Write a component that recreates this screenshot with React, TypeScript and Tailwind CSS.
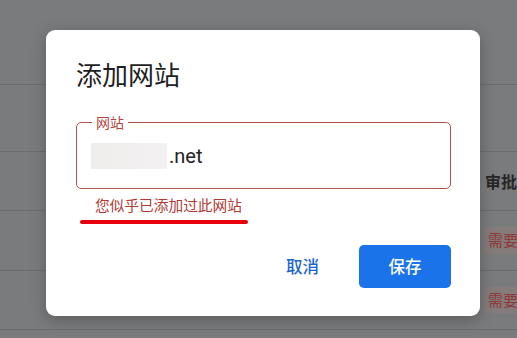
import React from "react";

const cjk = { fontFamily: '"Noto Sans CJK SC", "Noto Sans", sans-serif' };
const latin = { fontFamily: 'Roboto, "Noto Sans CJK SC", sans-serif' };

function BackgroundRows() {
    return (
        <div className="flex flex-col w-full h-full">
            <div className="h-[85px] border-b border-[#6c6d6e] shrink-0" />
            <div className="h-[67px] border-b border-[#6c6d6e] shrink-0" />
            <div className="h-[59px] border-b border-[#6c6d6e] shrink-0 flex items-center justify-end">
                <span className="text-[16px] font-bold text-[#262626] w-[32px] overflow-hidden whitespace-nowrap" style={cjk}>
                    审批
                </span>
            </div>
            <div className="h-[60px] border-b border-[#6c6d6e] shrink-0 flex items-center justify-end">
                <span className="bg-[#857b7b] text-[#8c3a3a] text-[15px] pl-[4px] py-[2px] w-[33px] overflow-hidden whitespace-nowrap" style={cjk}>
                    需要
                </span>
            </div>
            <div className="h-[59px] border-b border-[#6c6d6e] shrink-0 flex items-center justify-end">
                <span className="bg-[#857b7b] text-[#8c3a3a] text-[15px] pl-[4px] py-[2px] w-[33px] overflow-hidden whitespace-nowrap" style={cjk}>
                    需要
                </span>
            </div>
            <div className="flex-1" />
        </div>
    );
}

export default function App() {
    return (
        <div className="relative w-[517px] h-[338px] overflow-hidden bg-[#7a7b7c]" style={cjk}>
            <BackgroundRows />

            {/* Dialog */}
            <div className="absolute left-[46px] top-[30px] w-[434px] h-[286px] bg-white rounded-[9px] shadow-[0_4px_16px_rgba(0,0,0,0.25)] flex flex-col pl-[30px] pr-[29px] pt-[27px]">
                <h2 className="text-[26px] leading-[34px] text-[#1f1f1f] font-normal">添加网站</h2>

                <div className="relative mt-[31px] h-[67px] border border-[#b5524c] rounded-[5px] flex items-center pl-[14px]">
                    <span className="absolute -top-[11px] left-[15px] bg-white px-[4px] text-[14px] leading-[20px] text-[#b4453f]">
                        网站
                    </span>
                    <div className="w-[76px] h-[26px] bg-gradient-to-r from-[#efecec] to-[#f3f1f1]" />
                    <span className="ml-[2px] text-[20px] text-[#222] leading-none" style={latin}>
                        .net
                    </span>
                </div>

                <div className="mt-[6px] pl-[19px] text-[14.7px] leading-[20px] text-[#b03a35]">您似乎已添加过此网站</div>
                <div className="mt-[5px] ml-[4px] w-[168px] h-[4px] rounded-full bg-[#e6000c]" />

                <div className="mt-[21px] flex items-center justify-end gap-[40px]">
                    <button className="text-[16.5px] font-medium text-[#1b66cc] leading-none">取消</button>
                    <button className="w-[92px] h-[43px] rounded-[5px] bg-[#1a73e8] text-white text-[16.5px] font-medium">
                        保存
                    </button>
                </div>
            </div>
        </div>
    );
}
